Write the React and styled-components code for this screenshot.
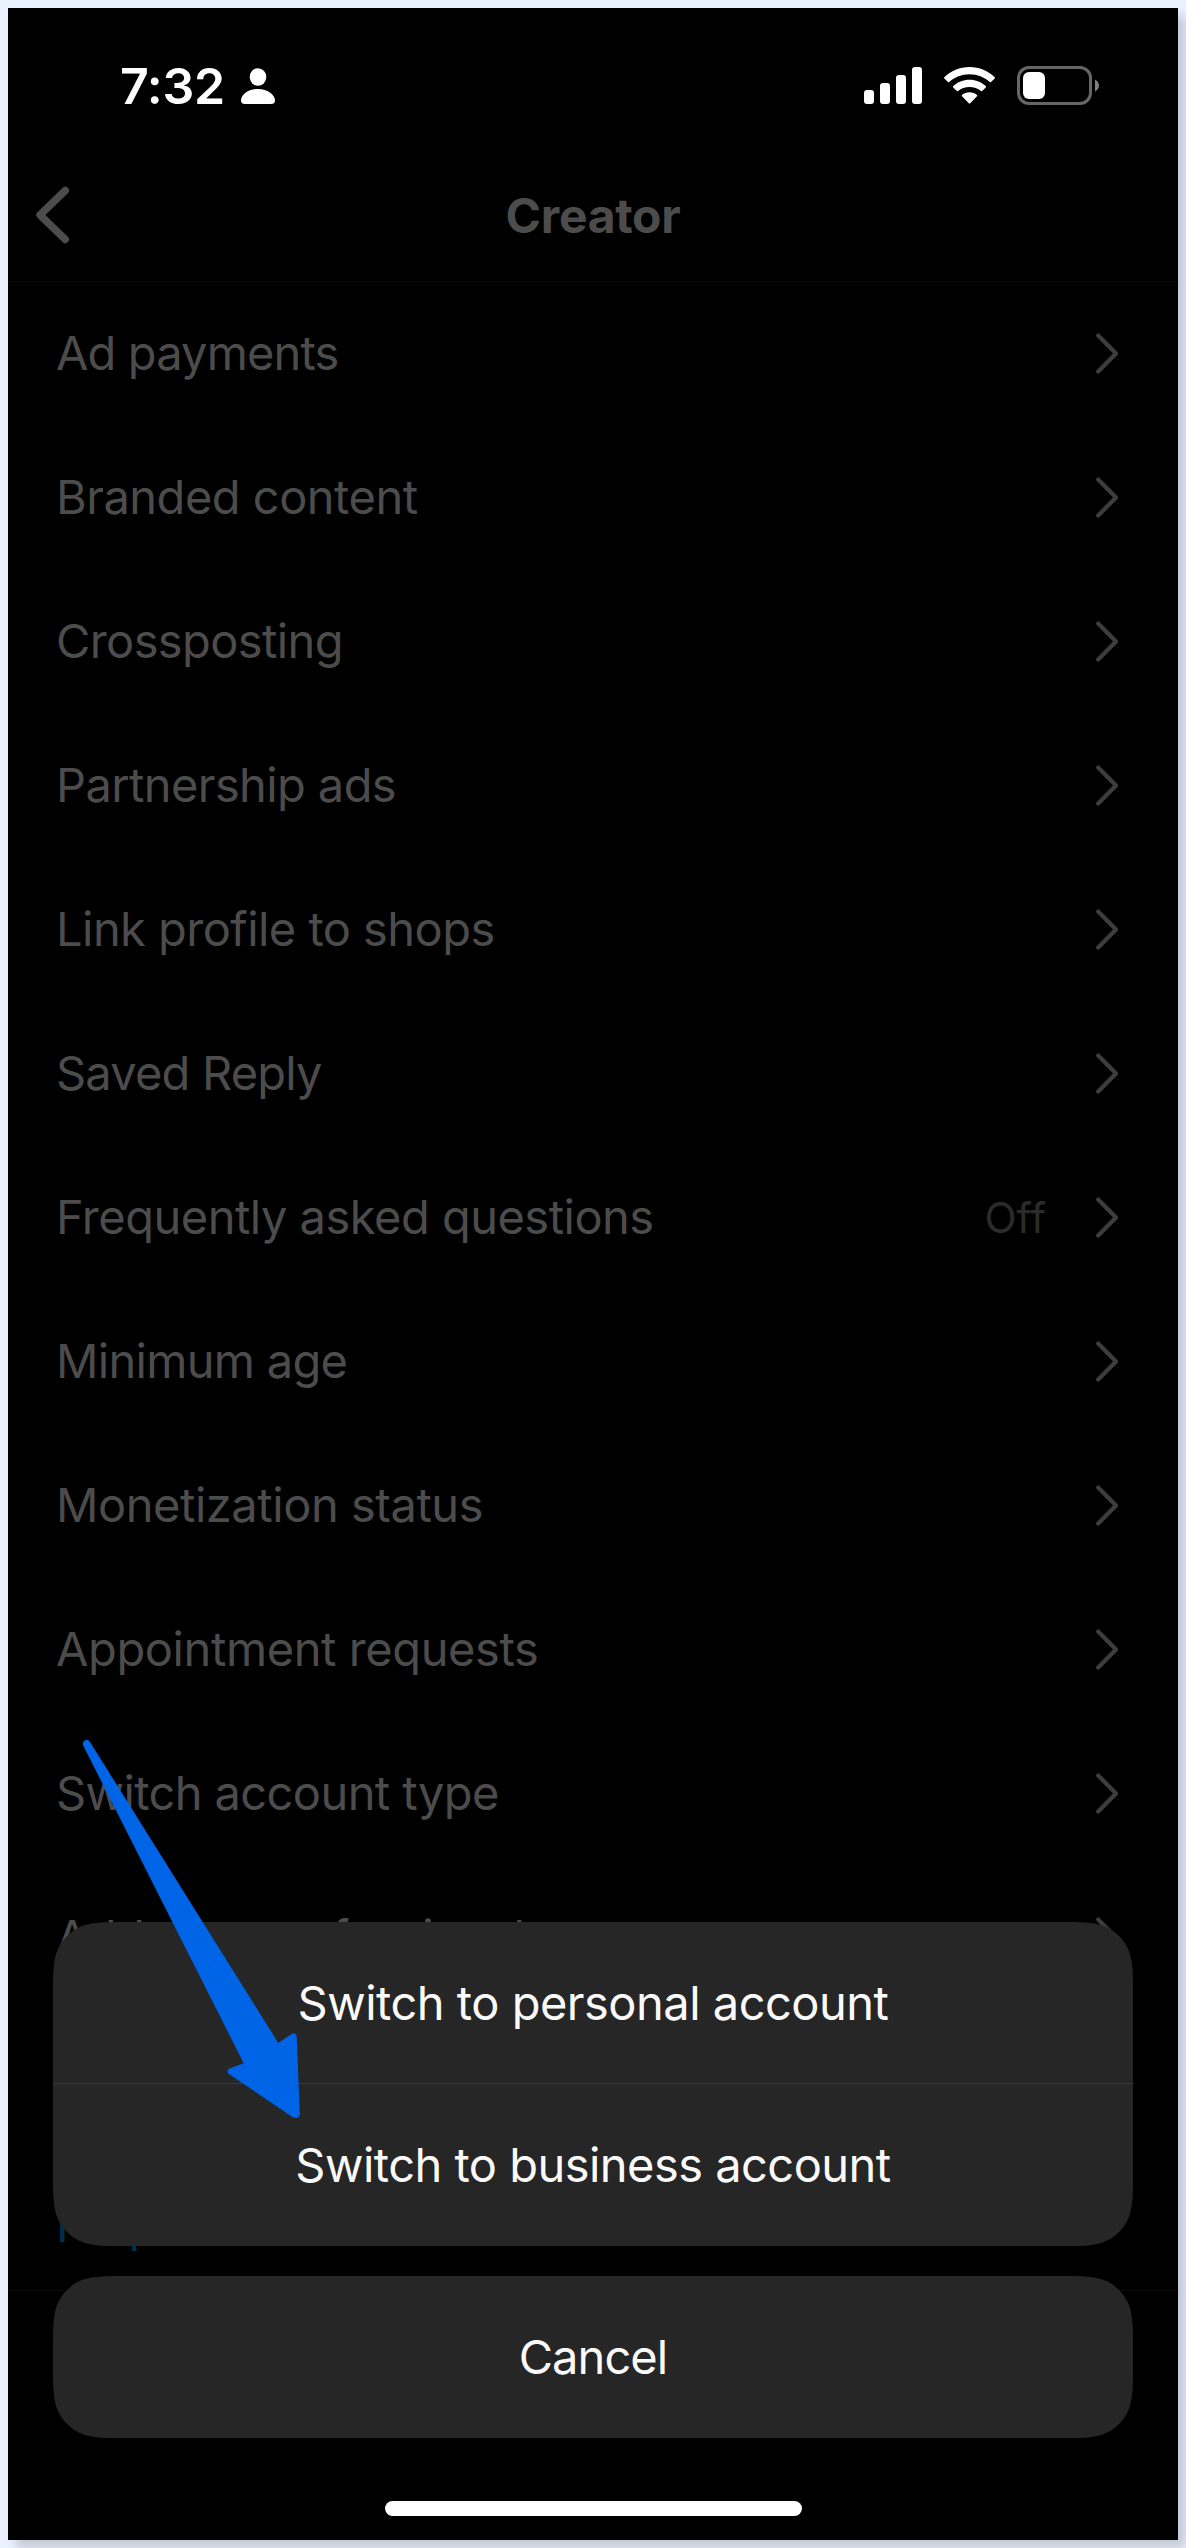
import styled, { createGlobalStyle } from 'styled-components'

const GlobalStyle = createGlobalStyle`
  * {
    box-sizing: border-box;
  }
  body {
    margin: 0;
    background: #ebf2ff;
    font-family: Inter, 'Liberation Sans', sans-serif;
    overflow: hidden;
  }
  button {
    border: 0;
    padding: 0;
    background: none;
    font: inherit;
    color: inherit;
  }
`

const StyledPage = styled.div`
  height: 2548px;
  padding: 8px;
`
const StyledPhone = styled.main`
  position: relative;
  width: 1170px;
  height: 2532px;
  background: #000;
  box-shadow: 8px 8px 10px rgba(0, 0, 0, 0.17);
`
const StyledStatusBar = styled.div`
  display: flex;
  justify-content: space-between;
  align-items: flex-start;
  height: 141px;
  padding: 58px 79px 0 112px;
  color: #fff;
`
const StyledClock = styled.div`
  display: flex;
  align-items: center;
  gap: 16px;
  height: 40px;
  font-size: 50px;
  font-weight: 600;
  letter-spacing: -0.3px;
`
const StyledIndicators = styled.div`
  display: flex;
  gap: 22px;
`
const StyledHeader = styled.header`
  display: grid;
  grid-template-columns: 120px 1fr 120px;
  align-items: center;
  height: 133px;
  border-bottom: 1px solid #0b0b0b;
  color: #4c4c4c;
`
const StyledBack = styled.button`
  display: flex;
  padding-left: 27px;
`
const StyledTitle = styled.h1`
  margin: 0;
  font-size: 48px;
  font-weight: 700;
  letter-spacing: -0.3px;
  text-align: center;
`
const StyledList = styled.div`
  margin-top: -1px;
`
const StyledRow = styled.div`
  display: flex;
  align-items: center;
  height: 144px;
  padding: 0 59px 0 48px;
  color: #4c4c4c;
  font-size: 47px;
`
const StyledLabel = styled.span`
  flex: 1;
  padding-bottom: 2px;
  letter-spacing: ${({ $tracking }) => $tracking}px;
`
const StyledValue = styled.span`
  margin-right: 50px;
  color: #2b2b2b;
  font-size: 42px;
`
const StyledHelp = styled.div`
  display: flex;
  align-items: center;
  height: 130px;
  margin-top: 151px;
  padding: 0 0 2px 48px;
  color: #003050;
  font-size: 47px;
  letter-spacing: -0.4px;
`
const StyledDivider = styled.div`
  height: 1px;
  background: #0b0b0b;
`
const StyledOverlay = styled.div`
  position: absolute;
  left: 45px;
  right: 45px;
  bottom: 24px;
  display: flex;
  flex-direction: column;
  gap: 30px;
  align-items: stretch;
  color: #fafafa;
`
const StyledSheet = styled.div`
  display: flex;
  flex-direction: column;
  height: ${({ $height }) => $height}px;
  background: #262626;
  clip-path: path('${({ $height }) => squircle(1080, $height, 48)}');
`
const StyledAction = styled.button`
  height: 162px;
  padding-bottom: 1px;
  font-size: 47px;
  letter-spacing: ${({ $tracking }) => $tracking}px;

  &:not(:last-child) {
    padding-bottom: 0;
    border-bottom: 1px solid #3a3a3a;
  }
`
const StyledHomeIndicator = styled.div`
  align-self: center;
  width: 417px;
  height: 15px;
  margin-top: 33px;
  border-radius: 8px;
  background: #fff;
`
const StyledArrow = styled.svg`
  position: absolute;
  left: 72px;
  top: 1722px;
`

// rounded rect with continuous corners
function squircle(w, h, r) {
  const corner = (px, py) => [px * r, py * r]
  const points = [
    corner(1.5287, 0), corner(1.0885, 0), corner(0.8684, 0), corner(0.6315, 0.0749),
    corner(0.3728, 0.1691), corner(0.1691, 0.3728), corner(0.0749, 0.6315),
    corner(0, 0.8684), corner(0, 1.0885), corner(0, 1.5287)
  ]
  const line = (list, fx, fy) => list.map(([x, y]) => `${fx ? w - x : x} ${fy ? h - y : y}`)
  const side = ([start, ...rest], first) => `${first ? 'M' : 'L'}${start} C${rest.join(' ')}`
  const back = [...points].reverse()

  return [
    side(line(back, false, false), true),
    side(line(points, true, false)),
    side(line(back, true, true)),
    side(line(points, false, true)),
    'Z'
  ].join(' ')
}

const rows = [
  { label: 'Ad payments', tracking: -0.85 },
  { label: 'Branded content', tracking: -0.5 },
  { label: 'Crossposting', tracking: -0.6 },
  { label: 'Partnership ads', tracking: -0.6 },
  { label: 'Link profile to shops', tracking: -0.54 },
  { label: 'Saved Reply', tracking: -0.8 },
  { label: 'Frequently asked questions', tracking: -0.5, value: 'Off' },
  { label: 'Minimum age', tracking: -0.7 },
  { label: 'Monetization status', tracking: -0.45 },
  { label: 'Appointment requests', tracking: -0.4 },
  { label: 'Switch account type', tracking: -0.6 },
  { label: 'Add new professional account', tracking: -0.65 }
]

const PersonIcon = () => (
  <svg width='34' height='36' viewBox='0 0 34 36' fill='currentColor'>
    <ellipse cx='17' cy='9' rx='8.3' ry='8.8' />
    <path d='M4 36Q0 36 0 32.500C0 27 7 21 17 21S34 27 34 32.500Q34 36 30 36Z' />
  </svg>
)

const SignalIcon = () => (
  <svg width='58' height='38' viewBox='0 0 58 38' fill='currentColor'>
    <rect x='0' y='24' width='10' height='14' rx='3' />
    <rect x='16' y='17' width='10' height='21' rx='3' />
    <rect x='32' y='9' width='10' height='29' rx='3' />
    <rect x='48' y='1' width='10' height='37' rx='3' />
  </svg>
)

const WifiIcon = () => (
  <svg width='51' height='38' viewBox='0 0 51 38' fill='currentColor'>
    <path d='M25.500 1C35.300 1 44.300 4.900 50.700 11.200Q51.300 11.800 50.700 12.500L47 16Q46.400 16.600 45.800 16C40.400 11 33.300 8.200 25.500 8.200S10.600 11 5.200 16Q4.600 16.600 4 16L.3 12.500Q-.3 11.800 .3 11.200C6.700 4.900 15.700 1 25.500 1Z' />
    <path d='M25.500 13.800C31.800 13.800 37.500 16.200 41.800 20.100Q42.400 20.700 41.800 21.400L38.100 25Q37.500 25.600 36.900 25C33.900 22.400 29.900 20.900 25.500 20.900S17.100 22.400 14.100 25Q13.500 25.600 12.900 25L9.200 21.400Q8.600 20.700 9.200 20.100C13.500 16.200 19.200 13.800 25.500 13.800Z' />
    <path d='M25.500 26.300C28.400 26.300 31 27.300 33 29Q33.700 29.600 33 30.300L26.200 37.300Q25.500 38 24.800 37.300L18 30.300Q17.300 29.600 18 29C20 27.300 22.600 26.300 25.500 26.300Z' />
  </svg>
)

const BatteryIcon = () => (
  <svg width='82' height='39' viewBox='0 0 82 39'>
    <rect x='1.500' y='1.500' width='72' height='36' rx='10.500' fill='none' stroke='#666' strokeWidth='3' />
    <rect x='6' y='6' width='22' height='27' rx='6' fill='#fff' />
    <path d='M78 13.500C80.500 14.800 82 17 82 19.500S80.500 24.200 78 25.500Z' fill='#808080' />
  </svg>
)

const BackIcon = () => (
  <svg width='36' height='58' viewBox='0 0 36 58' fill='none' stroke='currentColor' strokeWidth='7.500' strokeLinecap='round' strokeLinejoin='round'>
    <path d='M30.300 4.500L5 29L30.300 53.500' />
  </svg>
)

const ChevronIcon = () => (
  <svg width='23' height='41' viewBox='0 0 23 41' fill='none' stroke='#3d3d3d' strokeWidth='4.200' strokeLinecap='round' strokeLinejoin='round'>
    <path d='M2.200 2.500L20 20.500L2.200 38.500' />
  </svg>
)

const Arrow = () => (
  <StyledArrow width='224' height='392' viewBox='80 1730 224 392' fill='#0064e6'>
    <path d='M83.200 1745.500C81.500 1741.500 86.500 1738 89.700 1741.500L278.300 2042.900L291.500 2034C294 2032.400 296.600 2033.600 296.700 2037L299.800 2114C299.900 2117.500 296 2119 292.700 2117.200L229 2074C226.700 2072.500 227.500 2069.300 230 2068.300L243.700 2063.200Z' />
  </StyledArrow>
)

const App = () => (
  <>
    <GlobalStyle />
    <StyledPage>
      <StyledPhone>
        <StyledStatusBar>
          <StyledClock>
            7:32
            <PersonIcon />
          </StyledClock>
          <StyledIndicators>
            <SignalIcon />
            <WifiIcon />
            <BatteryIcon />
          </StyledIndicators>
        </StyledStatusBar>
        <StyledHeader>
          <StyledBack aria-label='Back'>
            <BackIcon />
          </StyledBack>
          <StyledTitle>Creator</StyledTitle>
        </StyledHeader>
        <StyledList>
          {rows.map(({ label, value, tracking }) => (
            <StyledRow key={label}>
              <StyledLabel $tracking={tracking}>{label}</StyledLabel>
              {value && <StyledValue>{value}</StyledValue>}
              <ChevronIcon />
            </StyledRow>
          ))}
        </StyledList>
        <StyledHelp>Help</StyledHelp>
        <StyledDivider />
        <StyledOverlay>
          <StyledSheet $height={324}>
            <StyledAction $tracking={-0.5}>Switch to personal account</StyledAction>
            <StyledAction $tracking={-0.53}>Switch to business account</StyledAction>
          </StyledSheet>
          <StyledSheet $height={162}>
            <StyledAction $tracking={-0.9}>Cancel</StyledAction>
          </StyledSheet>
          <StyledHomeIndicator />
        </StyledOverlay>
        <Arrow />
      </StyledPhone>
    </StyledPage>
  </>
)

export default App
